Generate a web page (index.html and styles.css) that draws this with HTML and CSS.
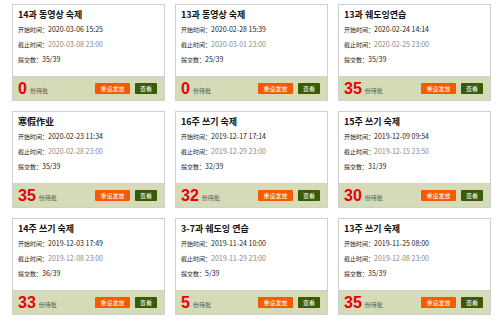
FILE: index.html
```html
<!DOCTYPE html>
<html lang="zh">
<head>
    <meta charset="UTF-8">
    <title>作业列表</title>
    <link rel="stylesheet" href="styles.css">
</head>
<body>
    <div class="task-grid">
        <div class="task-card">
            <div class="task-body">
                <h3>14과 동영상 숙제</h3>
                <p>开始时间：<span class="start">2020-03-06 15:25</span></p>
                <p>截止时间：<span class="end">2020-03-08 23:00</span></p>
                <p>提交数：<span class="start">35/39</span></p>
            </div>
            <div class="task-footer">
                <span class="pending">0</span><span class="pending-label">份待批</span>
                <div class="actions">
                    <button class="reset-btn">重设发放</button>
                    <button class="view-btn">查看</button>
                </div>
            </div>
        </div>

        <div class="task-card">
            <div class="task-body">
                <h3>13과 동영상 숙제</h3>
                <p>开始时间：<span class="start">2020-02-28 15:39</span></p>
                <p>截止时间：<span class="end">2020-03-01 23:00</span></p>
                <p>提交数：<span class="start">25/39</span></p>
            </div>
            <div class="task-footer">
                <span class="pending">0</span><span class="pending-label">份待批</span>
                <div class="actions">
                    <button class="reset-btn">重设发放</button>
                    <button class="view-btn">查看</button>
                </div>
            </div>
        </div>

        <div class="task-card">
            <div class="task-body">
                <h3>13과 쉐도잉연습</h3>
                <p>开始时间：<span class="start">2020-02-24 14:14</span></p>
                <p>截止时间：<span class="end">2020-02-25 23:00</span></p>
                <p>提交数：<span class="start">35/39</span></p>
            </div>
            <div class="task-footer">
                <span class="pending">35</span><span class="pending-label">份待批</span>
                <div class="actions">
                    <button class="reset-btn">重设发放</button>
                    <button class="view-btn">查看</button>
                </div>
            </div>
        </div>

        <div class="task-card">
            <div class="task-body">
                <h3>寒假作业</h3>
                <p>开始时间：<span class="start">2020-02-23 11:34</span></p>
                <p>截止时间：<span class="end">2020-02-28 23:00</span></p>
                <p>提交数：<span class="start">35/39</span></p>
            </div>
            <div class="task-footer">
                <span class="pending">35</span><span class="pending-label">份待批</span>
                <div class="actions">
                    <button class="reset-btn">重设发放</button>
                    <button class="view-btn">查看</button>
                </div>
            </div>
        </div>

        <div class="task-card">
            <div class="task-body">
                <h3>16주 쓰기 숙제</h3>
                <p>开始时间：<span class="start">2019-12-17 17:14</span></p>
                <p>截止时间：<span class="end">2019-12-29 23:00</span></p>
                <p>提交数：<span class="start">32/39</span></p>
            </div>
            <div class="task-footer">
                <span class="pending">32</span><span class="pending-label">份待批</span>
                <div class="actions">
                    <button class="reset-btn">重设发放</button>
                    <button class="view-btn">查看</button>
                </div>
            </div>
        </div>

        <div class="task-card">
            <div class="task-body">
                <h3>15주 쓰기 숙제</h3>
                <p>开始时间：<span class="start">2019-12-09 09:54</span></p>
                <p>截止时间：<span class="end">2019-12-15 23:50</span></p>
                <p>提交数：<span class="start">31/39</span></p>
            </div>
            <div class="task-footer">
                <span class="pending">30</span><span class="pending-label">份待批</span>
                <div class="actions">
                    <button class="reset-btn">重设发放</button>
                    <button class="view-btn">查看</button>
                </div>
            </div>
        </div>

        <div class="task-card">
            <div class="task-body">
                <h3>14주 쓰기 숙제</h3>
                <p>开始时间：<span class="start">2019-12-03 17:49</span></p>
                <p>截止时间：<span class="end">2019-12-08 23:00</span></p>
                <p>提交数：<span class="start">36/39</span></p>
            </div>
            <div class="task-footer">
                <span class="pending">33</span><span class="pending-label">份待批</span>
                <div class="actions">
                    <button class="reset-btn">重设发放</button>
                    <button class="view-btn">查看</button>
                </div>
            </div>
        </div>

        <div class="task-card">
            <div class="task-body">
                <h3>3-7과 쉐도잉 연습</h3>
                <p>开始时间：<span class="start">2019-11-24 10:00</span></p>
                <p>截止时间：<span class="end">2019-11-29 23:00</span></p>
                <p>提交数：<span class="start">5/39</span></p>
            </div>
            <div class="task-footer">
                <span class="pending">5</span><span class="pending-label">份待批</span>
                <div class="actions">
                    <button class="reset-btn">重设发放</button>
                    <button class="view-btn">查看</button>
                </div>
            </div>
        </div>

        <div class="task-card">
            <div class="task-body">
                <h3>13주 쓰기 숙제</h3>
                <p>开始时间：<span class="start">2019-11-25 08:00</span></p>
                <p>截止时间：<span class="end">2019-12-08 23:00</span></p>
                <p>提交数：<span class="start">35/39</span></p>
            </div>
            <div class="task-footer">
                <span class="pending">35</span><span class="pending-label">份待批</span>
                <div class="actions">
                    <button class="reset-btn">重设发放</button>
                    <button class="view-btn">查看</button>
                </div>
            </div>
        </div>
    </div>
</body>
</html>
```

FILE: styles.css
```css
:root {
    --border: #cfcfcf;
    --footer: #d4dbb6;
    --red: #e8000b;
    --orange: #f55a00;
    --green: #3a5a07;
    --text: #222;
    --muted: #888;
}

* {
    margin: 0;
    padding: 0;
    box-sizing: border-box;
    font-family: "Noto Sans CJK SC", "Noto Sans CJK KR", sans-serif;
}

body {
    background: #fff;
    color: var(--text);
}

.task-grid {
    display: grid;
    grid-template-columns: repeat(3, 153px);
    column-gap: 10px;
    row-gap: 10px;
    padding: 4px 12px;
}

.task-card {
    border: 1px solid var(--border);
    height: 97px;
    display: flex;
    flex-direction: column;
}

.task-body {
    height: 71px;
    padding: 3px 5px 0;
    background: #fff;
}

.task-body h3 {
    font-size: 9px;
    font-weight: 700;
    line-height: 14px;
    color: #111;
}

.task-body p {
    font-size: 6px;
    line-height: 15px;
    color: var(--text);
}

.task-body .start,
.task-body .end {
    font-size: 7px;
}

.task-body .start {
    color: var(--text);
}

.task-body .end {
    color: var(--muted);
}

.task-footer {
    flex: 1;
    background: var(--footer);
    border-top: 1px solid var(--border);
    display: flex;
    align-items: center;
    padding: 0 7px 0 5px;
}

.pending {
    color: var(--red);
    font-size: 16px;
    font-weight: 700;
    font-family: "Liberation Sans", sans-serif;
    line-height: 16px;
}

.pending-label {
    font-size: 6px;
    color: #555;
    margin-left: 3px;
    margin-top: 4px;
}

.actions {
    margin-left: auto;
    display: flex;
    gap: 5px;
}

.reset-btn, .view-btn {
    border: none;
    color: #fff;
    font-size: 6px;
    height: 11px;
    line-height: 11px;
    border-radius: 1px;
}

.reset-btn {
    background: var(--orange);
    width: 35px;
}

.view-btn {
    background: var(--green);
    width: 22px;
}
```
